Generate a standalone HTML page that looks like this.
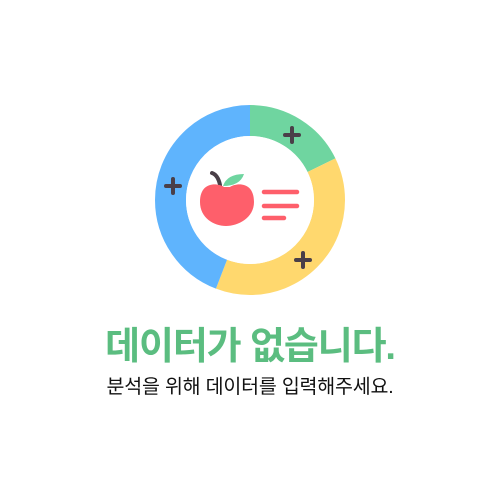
<!DOCTYPE html>
<html><head><meta charset="utf-8"><style>
html,body{margin:0;padding:0;background:#fff;width:500px;height:500px;overflow:hidden}
.t{position:absolute;left:0;width:500px;text-align:center;font-family:"Liberation Sans","Noto Sans CJK KR",sans-serif;white-space:nowrap}
#h{top:315px;font-size:38px;font-weight:bold;color:#5bbd80;letter-spacing:-1.1px}
#s{top:370px;font-size:19.5px;color:#111;letter-spacing:-0.2px}
</style></head><body>
<svg width="500" height="500" style="position:absolute;left:0;top:0">
<g transform="rotate(-90 250 200)" fill="none" stroke-width="31">
<circle cx="250" cy="200" r="79.5" stroke="#6fd5a0" stroke-dasharray="88.8 500"/>
<circle cx="250" cy="200" r="79.5" stroke="#ffd86e" stroke-dasharray="0 88.8 190 500"/>
<circle cx="250" cy="200" r="79.5" stroke="#5fb4fd" stroke-dasharray="0 278.8 221 500"/>
</g>
<circle cx="250" cy="200" r="64" fill="#fff"/>
<g stroke="#4a3f48" stroke-width="4" stroke-linecap="round">
<path d="M173 179v14M166 186h14"/><path d="M292 128v14M285 135h14"/><path d="M303 253v14M296 260h14"/>
</g>
<path d="M220 185q-2-10-8-12" stroke="#4a3f48" stroke-width="4" fill="none" stroke-linecap="round"/>
<path d="M223 186q4-12 21-12q-4 12-21 12z" fill="#6fd5a0"/>
<path d="M224 187c-6-4-24-6-24 15c0 16 14 24 26 24s28-8 28-24c0-21-18-19-24-15z" fill="#fe5f6b"/>
<g stroke="#fe5f6b" stroke-width="4.5" stroke-linecap="round">
<path d="M264 192h33M264 206h33M264 218h20"/>
</g>
</svg>
<div class="t" id="h">데이터가 없습니다.</div>
<div class="t" id="s">분석을 위해 데이터를 입력해주세요.</div>
</body></html>
